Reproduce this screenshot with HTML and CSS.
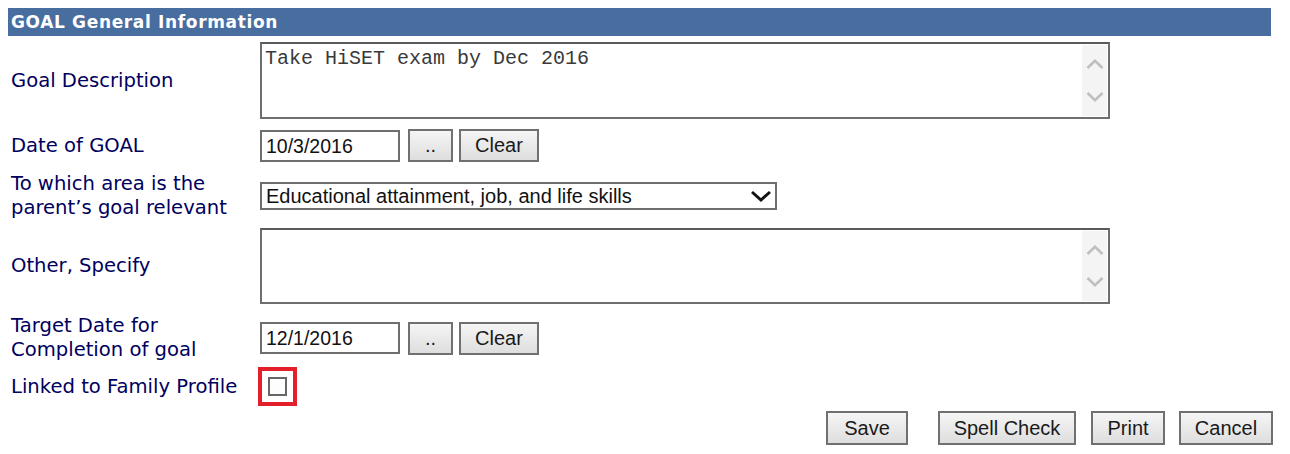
FILE: index.html
```html
<!DOCTYPE html>
<html>
<head>
<meta charset="utf-8">
<link rel="stylesheet" href="styles.css">
</head>
<body>
<div class="form">
  <div class="hd">GOAL General Information</div>

  <div class="row row-desc">
    <div class="lbl">Goal Description</div>
    <div class="ta">
      <div class="ta-text">Take HiSET exam by Dec 2016</div>
      <div class="sb">
        <svg width="18" height="10" viewBox="0 0 18 10"><path d="M1.5 9 L9 1.8 L16.5 9" fill="none" stroke="#bfbfbf" stroke-width="2.6"/></svg>
        <svg width="18" height="10" viewBox="0 0 18 10"><path d="M1.5 1 L9 8.2 L16.5 1" fill="none" stroke="#bfbfbf" stroke-width="2.6"/></svg>
      </div>
    </div>
  </div>

  <div class="row row-date">
    <div class="lbl">Date of GOAL</div>
    <div class="ctl">
      <div class="inp">10/3/2016</div>
      <button class="btn b-dots">..</button>
      <button class="btn b-clear">Clear</button>
    </div>
  </div>

  <div class="row row-area">
    <div class="lbl">To which area is the<br>parent’s goal relevant</div>
    <div class="sel">
      <span>Educational attainment, job, and life skills</span>
      <svg width="22" height="12" viewBox="0 0 22 12"><path d="M2 2 L11 10 L20 2" fill="none" stroke="#111" stroke-width="3"/></svg>
    </div>
  </div>

  <div class="row row-other">
    <div class="lbl">Other, Specify</div>
    <div class="ta ta2">
      <div class="ta-text"></div>
      <div class="sb">
        <svg width="18" height="10" viewBox="0 0 18 10"><path d="M1.5 9 L9 1.8 L16.5 9" fill="none" stroke="#bfbfbf" stroke-width="2.6"/></svg>
        <svg width="18" height="10" viewBox="0 0 18 10"><path d="M1.5 1 L9 8.2 L16.5 1" fill="none" stroke="#bfbfbf" stroke-width="2.6"/></svg>
      </div>
    </div>
  </div>

  <div class="row row-target">
    <div class="lbl">Target Date for<br>Completion of goal</div>
    <div class="ctl">
      <div class="inp">12/1/2016</div>
      <button class="btn b-dots">..</button>
      <button class="btn b-clear">Clear</button>
    </div>
  </div>

  <div class="row row-link">
    <div class="lbl">Linked to Family Profile</div>
    <div class="hl"><div class="cb"></div></div>
  </div>

  <div class="actions">
    <button class="btn b-save">Save</button>
    <button class="btn b-spell">Spell Check</button>
    <button class="btn b-print">Print</button>
    <button class="btn b-cancel">Cancel</button>
  </div>
</div>
</body>
</html>
```

FILE: styles.css
```css
html, body { margin: 0; padding: 0; background: #fff; }
body { padding: 8px; }
.form { width: 1265px; }
.hd {
  width: 1260px;
  height: 28px;
  line-height: 29px;
  padding-left: 3px;
  background: #486d9f;
  color: #fff;
  font-family: "DejaVu Sans", Verdana, sans-serif;
  font-weight: bold;
  font-size: 17px;
  letter-spacing: 0.65px;
  box-sizing: content-box;
}
.row { display: flex; align-items: center; }
.lbl {
  width: 249px;
  padding-left: 3px;
  font-family: "DejaVu Sans", Verdana, sans-serif;
  font-size: 19.6px;
  line-height: 24px;
  color: #00005e;
  flex: none;
}
.row-desc { padding: 6px 0 4px; }
.row-date { padding: 6px 0 5px; }
.row-area { padding: 5px 0 4px; }
.row-other { padding: 4px 0 6px; }
.row-target { padding: 4px 0 4px; }
.row-link { padding: 1px 0 5px; }

.ta {
  width: 850px;
  height: 77px;
  box-sizing: border-box;
  border: 2px solid #6e6e6e;
  border-top-color: #5a5a5a;
  display: flex;
  background: #fff;
}
.ta2 { height: 76px; }
.ta-text {
  flex: 1;
  padding: 4px 3px;
  font-family: "Liberation Mono", "Courier New", monospace;
  font-size: 20px;
  line-height: 22px;
  color: #3a3a3a;
}
.sb {
  width: 25px;
  margin: 1px 1px 1px 0;
  background: #f4f4f4;
  display: flex;
  flex-direction: column;
  align-items: center;
  justify-content: space-between;
  padding: 14px 0 14px;
}
.sb svg { display: block; }

.ctl { display: flex; align-items: center; }
.inp {
  width: 140px;
  height: 32px;
  box-sizing: border-box;
  border: 2px solid #6e6e6e;
  padding: 0 4px;
  font-family: "Liberation Sans", Arial, sans-serif;
  font-size: 19.5px;
  line-height: 28px;
  color: #111;
}
.btn {
  height: 33px;
  box-sizing: border-box;
  border: 2px solid #707070;
  background: linear-gradient(#f5f5f5, #dedede);
  font-family: "Liberation Sans", Arial, sans-serif;
  font-size: 20px;
  color: #1a1a1a;
  padding: 0;
  margin: 0;
  line-height: 29px;
}
.b-dots { width: 45px; margin-left: 8px; }
.b-clear { width: 80px; margin-left: 6px; }

.sel {
  width: 517px;
  height: 28px;
  box-sizing: border-box;
  border: 2px solid #6e6e6e;
  display: flex;
  align-items: center;
  justify-content: space-between;
  padding: 0 3px 0 4px;
  font-family: "Liberation Sans", Arial, sans-serif;
  font-size: 20px;
  color: #111;
}
.sel svg { display: block; }

.hl {
  width: 39px;
  height: 39px;
  box-sizing: border-box;
  border: 4px solid #e3202a;
  margin-left: -2px;
  display: flex;
  align-items: center;
  justify-content: center;
}
.cb {
  width: 19px;
  height: 19px;
  box-sizing: border-box;
  border: 2px solid #666;
  background: #fdfdfd;
}

.actions { display: flex; justify-content: flex-end; height: 34px; }
.actions .btn { height: 34px; line-height: 30px; }
.b-save { width: 82px; }
.b-spell { width: 138px; margin-left: 30px; }
.b-print { width: 74px; margin-left: 15px; }
.b-cancel { width: 94px; margin-left: 14px; }
```
